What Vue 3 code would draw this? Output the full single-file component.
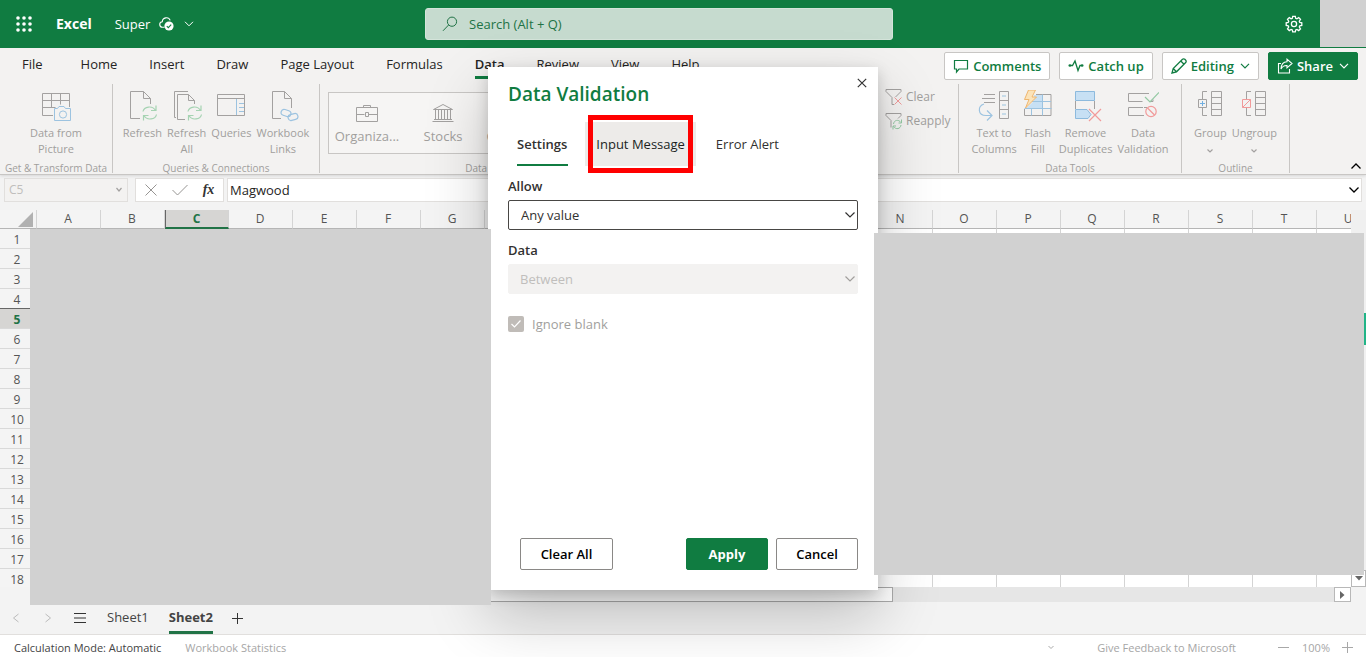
<script setup>
import { ref } from 'vue'

const menu = ['File', 'Home', 'Insert', 'Draw', 'Page Layout', 'Formulas', 'Data', 'Review', 'View', 'Help']
const columns = 'ABCDEFGHIJKLMNOPQRSTU'.split('')
const allow = ref('Any value')
const between = ref('Between')
const ignoreBlank = ref(true)
const cellValue = ref('Magwood')
const nameBox = ref('C5')
</script>

<template>
  <div class="app">
    <header class="topbar">
      <button class="waffle" aria-label="App launcher">
        <svg width="16" height="16" viewBox="0 0 16 16" fill="#fff">
          <g v-for="y in 3" :key="y">
            <circle v-for="x in 3" :key="x" :cx="x * 6 - 4" :cy="y * 6 - 4" r="1.8" />
          </g>
        </svg>
      </button>
      <span class="brand">Excel</span>
      <button class="docname">
        Super
        <svg width="16" height="16" viewBox="0 0 16 16" fill="none" stroke="#fff" stroke-width="1.1">
          <path d="M5.5 11.2H3.6a2.7 2.7 0 0 1-.3-5.4A4.1 4.1 0 0 1 11.2 4.4" />
          <circle cx="10" cy="10" r="4.6" fill="#fff" stroke="none" />
          <path d="M7.8 10.2l1.5 1.5 2.9-3.1" stroke="#107c41" />
        </svg>
        <svg width="10" height="6" viewBox="0 0 10 6" fill="none" stroke="#fff"><path d="M1 .8l4 4 4-4" /></svg>
      </button>
      <label class="search">
        <svg width="16" height="16" viewBox="0 0 16 16" fill="none" stroke="#217346"><circle cx="10" cy="5.7" r="4.6" /><path d="M6.6 9L1 14.8" /></svg>
        <input type="text" placeholder="Search (Alt + Q)" aria-label="Search" />
      </label>
      <button class="gear" aria-label="Settings">
        <svg width="18" height="18" viewBox="0 0 18 18" fill="none" stroke="#fff" stroke-width="1.3">
          <path d="M7.7 1.3h2.6l.4 2 1.2.5 1.8-1.2 1.8 1.8-1.2 1.8.5 1.2 2 .4v2.6l-2 .4-.5 1.2 1.2 1.8-1.8 1.8-1.8-1.2-1.2.5-.4 2H7.7l-.4-2-1.200-.5-1.800 1.200-1.800-1.800 1.200-1.800-.5-1.200-2-.4V7.800l2-.4.5-1.200-1.200-1.800 1.800-1.800 1.800 1.200 1.200-.5z" />
          <circle cx="9" cy="9" r="2.600" />
        </svg>
      </button>
      <div class="account"></div>
    </header>

    <section class="ribbon">
      <div class="menurow">
        <nav class="menu">
          <button v-for="m in menu" :key="m" :class="{ on: m === 'Data' }">{{ m }}</button>
        </nav>
        <div class="actions">
          <button class="act">
            <svg width="16" height="16" viewBox="0 0 16 16" fill="none" stroke="#107c41" stroke-width="1.200"><path d="M1.500 2.500h13v8.500H6L3.500 14v-3h-2z" /></svg>Comments
          </button>
          <button class="act">
            <svg width="16" height="16" viewBox="0 0 16 16" fill="none" stroke="#107c41" stroke-width="1.300"><path d="M2 7.500h2.500L7 3l3 9.500 2-5h2" /><circle cx="1.800" cy="7.500" r="1.300" fill="#107c41" stroke="none" /><circle cx="14.200" cy="7.500" r="1.300" fill="#107c41" stroke="none" /></svg>Catch up
          </button>
          <button class="act">
            <svg width="16" height="16" viewBox="0 0 16 16" fill="none" stroke="#107c41" stroke-width="1.300"><path d="M1 15l1.200-4.500L11.500 1.300a1.600 1.600 0 0 1 2.300 0l.9.9a1.600 1.600 0 0 1 0 2.300L5.500 13.800zM9.800 3l3.200 3.200M2.200 10.500l3.300 3.300" /></svg>Editing
            <svg class="chev" width="10" height="6" viewBox="0 0 10 6" fill="none" stroke="#107c41" stroke-width="1.200"><path d="M1 .8l4 4 4-4" /></svg>
          </button>
          <button class="act share">
            <svg width="16" height="16" viewBox="0 0 16 16" fill="none" stroke="#fff" stroke-width="1.100"><path d="M4 5.500H1.500v9.500h11V11" /><path d="M10 1.200l5 4.300-5 4.300V7.500C7 7.300 5.300 8.500 4 11c.2-4.300 2.300-7 6-7.200z" /></svg>Share
            <svg class="chev" width="10" height="6" viewBox="0 0 10 6" fill="none" stroke="#fff" stroke-width="1.200"><path d="M1 .8l4 4 4-4" /></svg>
          </button>
        </div>
      </div>

      <div class="groups">
        <div class="group g-get">
          <div class="tools">
            <button class="tool">
              <svg width="32" height="32" viewBox="0 0 32 32" fill="none" stroke="#a3a1a0"><path d="M13 25.500H2.500v-22h27V17M2.500 10.500h27M2.500 17.500h13M11.500 3.500v14M20.500 3.500v11" /><path d="M14.500 18.500h3l1.500-2h5l1.500 2h5v12h-16z" fill="#f3f2f1" stroke="#9cc3e0" /><circle cx="23" cy="24.500" r="3.600" stroke="#9cc3e0" /></svg>
              <span>Data from<br />Picture</span>
            </button>
          </div>
          <p>Get &amp; Transform Data</p>
        </div>
        <div class="group g-query">
          <div class="tools">
            <button class="tool">
              <svg width="32" height="32" viewBox="0 0 32 32" fill="none" stroke="#a3a1a0"><path d="M14 28.500H4.500V1.500h13l7 7V14M17.500 1.500v7h7" /><path d="M17 21.500c1-5 9.500-6.500 12.500-1M30 15.500v5h-5M30.500 24.500c-1 5-9.500 6.500-12.500 1M17.500 30.500v-5h5" stroke="#a5d3b2" stroke-width="1.200" /></svg>
              <span>Refresh</span>
            </button>
            <button class="tool">
              <svg width="32" height="32" viewBox="0 0 32 32" fill="none" stroke="#a3a1a0"><path d="M5 27.500H3.500v-26H17M14 29.500H6.500V4.500h11l6 6V14M17.500 4.500v6h6" /><path d="M17 21.500c1-5 9.500-6.500 12.500-1M30 15.500v5h-5M30.500 24.500c-1 5-9.500 6.500-12.500 1M17.500 30.500v-5h5" stroke="#a5d3b2" stroke-width="1.200" /></svg>
              <span>Refresh<br />All</span>
            </button>
            <button class="tool">
              <svg width="32" height="32" viewBox="0 0 32 32" fill="none" stroke="#a3a1a0"><path d="M2.500 4.500h27v21h-27zM2.500 8.500h27" /><path d="M21.500 9v16M24 13.500h5M24 17.500h5M24 21.500h5" stroke="#9cc3e0" /></svg>
              <span>Queries</span>
            </button>
            <button class="tool">
              <svg width="32" height="32" viewBox="0 0 32 32" fill="none" stroke="#a3a1a0"><path d="M14 28.500H5.500V1.500h12l7 7V18M17.500 1.500v7h7" /><g stroke="#9cc3e0" stroke-width="1.200"><rect x="14" y="20" width="10" height="6" rx="3" transform="rotate(18 19 23)" /><rect x="21" y="24" width="10" height="6" rx="3" transform="rotate(-14 26 27)" /></g></svg>
              <span>Workbook<br />Links</span>
            </button>
          </div>
          <p>Queries &amp; Connections</p>
        </div>
        <div class="group g-types">
          <div class="gallery">
            <button>
              <svg width="24" height="20" viewBox="0 0 24 20" fill="none" stroke="#a3a1a0"><path d="M1.500 4.500h21v14h-21zM8.500 4.500v-2h7v2M1.500 11.500h8M14 11.500h8.500M10.500 9.500h3v4h-3z" /></svg>
              Organiza...
            </button>
            <button>
              <svg width="24" height="20" viewBox="0 0 24 20" fill="none" stroke="#a3a1a0"><path d="M2.500 6.500L12 1.500l9.500 5zM1.500 18.500h21M3 16.500h18M4.500 7v9M7.500 7v9M10.500 7v9M13.500 7v9M16.500 7v9M19.500 7v9" /></svg>
              Stocks
            </button>
            <button>
              <svg width="24" height="20" viewBox="0 0 24 20" fill="none" stroke="#a3a1a0"><path d="M1.500 4.500h21v12h-21z" /></svg>
              Currencies
            </button>
          </div>
          <p>Data Types</p>
        </div>
        <div class="group g-sort">
          <div class="stack">
            <button>
              <svg width="18" height="18" viewBox="0 0 18 18" fill="none" stroke="#a3a1a0"><path d="M1 1.500h15v2L10.500 9M1 1.500v2L7 9.500v7h2" /><path d="M9.500 9.500l7 7M16.500 9.500l-7 7" stroke="#f19a9a" /></svg>Clear
            </button>
            <button>
              <svg width="18" height="18" viewBox="0 0 18 18" fill="none" stroke="#a3a1a0"><path d="M1 1.500h15v2L13 6.500M1 1.500v2L6 8.500v7" /><path d="M8.500 12c.5-4 5-5 7.500-1.500M16.500 7.500v3.500h-3M16 13c-.5 4-5 5-7.500 1.500M8 17.500V14h3" stroke="#93c9a3" /></svg>Reapply
            </button>
          </div>
        </div>
        <div class="group g-data">
          <div class="tools">
            <button class="tool">
              <svg width="32" height="32" viewBox="0 0 32 32" fill="none" stroke="#a3a1a0"><path d="M6 4.500h11M4 8.500h13M6 12.500h11M21.500 1.500h9v27h-9zM21.500 10.500h9M21.500 19.500h9" /><path d="M24 6h4M24 15h4M24 24h4M6 14C-.5 16-.5 25.500 8 25.500h5M9 20.500l5 5-5 5" stroke="#9cc3e0" stroke-width="1.200" /></svg>
              <span>Text to<br />Columns</span>
            </button>
            <button class="tool">
              <svg width="32" height="32" viewBox="0 0 32 32" fill="none" stroke="#a3a1a0"><path d="M14 4.500h15v21H2.500V19" /><path d="M12 5h8.500v13H4.500L12 11z" fill="#c7e0f4" stroke="none" /><path d="M2.500 18.500h27M9.500 11.500H29M9.500 18.500v7M20.500 4.500v21" stroke="#9cc3e0" /><path d="M6.500 0h7L10 7h4.500L3.500 18 7 9.500H2.500z" fill="#fbe3b9" stroke="#efb66f" /></svg>
              <span>Flash<br />Fill</span>
            </button>
            <button class="tool">
              <svg width="32" height="32" viewBox="0 0 32 32" fill="none" stroke="#a3a1a0"><path d="M5.500 11v8M24.500 11v8" /><path d="M5.500 1.500h19v9h-19zM5.500 19.500H17l4 5-3 4H5.500z" fill="#c7e0f4" stroke="#8dbadd" /><path d="M19 19l12 12M31 19L19 31" stroke="#f19a9a" stroke-width="1.200" /></svg>
              <span>Remove<br />Duplicates</span>
            </button>
            <button class="tool">
              <svg width="32" height="32" viewBox="0 0 32 32" fill="none" stroke="#a3a1a0"><path d="M22 3.500H1.500v8h14M16 17.500H1.500v8H17M22 11.500h4v-2M20 17.500h-3" /><path d="M18 7l5 5 9-9.500" stroke="#93c9a3" stroke-width="1.200" /><circle cx="24" cy="21.500" r="5.200" stroke="#f19a9a" stroke-width="1.200" /><path d="M20.500 18l7 7" stroke="#f19a9a" stroke-width="1.200" /></svg>
              <span>Data<br />Validation</span>
            </button>
          </div>
          <p>Data Tools</p>
        </div>
        <div class="group g-outline">
          <div class="tools">
            <button class="tool">
              <svg width="28" height="32" viewBox="0 0 28 32" fill="none" stroke="#a3a1a0"><path d="M11 1.500H6.500V9M6.500 18v7.500H11M15.500 1.500h10v24h-10zM15.500 7.500h10M15.500 13.500h10M15.500 19.500h10M2.500 9.500h8v8h-8z" /><path d="M6.500 11v5M4 13.500h5" stroke="#71afe0" /></svg>
              <span>Group</span>
              <svg class="tiny" width="8" height="5" viewBox="0 0 8 5" fill="none" stroke="#a3a1a0" stroke-width="1.200"><path d="M1.500 .5L4 3 6.500.5" /></svg>
            </button>
            <button class="tool">
              <svg width="28" height="32" viewBox="0 0 28 32" fill="none" stroke="#a3a1a0"><path d="M11 1.500H6.500V9M6.500 18v7.500H11M15.500 1.500h10v24h-10zM15.500 7.500h10M15.500 13.500h10M15.500 19.500h10" /><path d="M2.500 9.500h8v8h-8zM2.500 17.500l8-8" stroke="#f19a9a" /></svg>
              <span>Ungroup</span>
              <svg class="tiny" width="8" height="5" viewBox="0 0 8 5" fill="none" stroke="#a3a1a0" stroke-width="1.200"><path d="M1.500 .5L4 3 6.500.5" /></svg>
            </button>
          </div>
          <p>Outline</p>
        </div>
        <button class="collapse" aria-label="Collapse ribbon">
          <svg width="12" height="8" viewBox="0 0 12 8" fill="none" stroke="#000" stroke-width="1.300"><path d="M1.500 6.500L6 2l4.500 4.500" /></svg>
        </button>
      </div>
    </section>

    <section class="formula">
      <label class="namebox">
        <input v-model="nameBox" type="text" aria-label="Name box" disabled />
        <svg width="8" height="6" viewBox="0 0 8 6" fill="none" stroke="#a3a1a0" stroke-width="1.200"><path d="M1.500 1L4 4l2.500-3" /></svg>
      </label>
      <div class="fxbox">
        <button aria-label="Cancel entry"><svg width="14" height="14" viewBox="0 0 14 14" fill="none" stroke="#979593"><path d="M1.500 1.500l11 11M12.500 1.500l-11 11" /></svg></button>
        <button aria-label="Enter"><svg width="18" height="14" viewBox="0 0 18 14" fill="none" stroke="#979593"><path d="M1.500 7l5 5L16.500 2" /></svg></button>
        <button class="fx">fx</button>
      </div>
      <label class="entry">
        <input v-model="cellValue" type="text" aria-label="Formula bar" />
        <svg width="12" height="8" viewBox="0 0 12 8" fill="none" stroke="#000" stroke-width="1.300"><path d="M1.500 1.500L6 6l4.500-4.500" /></svg>
      </label>
    </section>

    <main class="sheet">
      <div class="viewport">
        <table>
          <thead>
            <tr>
              <th class="corner"><svg width="16" height="15" viewBox="0 0 16 15" fill="#b1b1b1"><path d="M15 0v15H0z" /></svg></th>
              <th v-for="c in columns" :key="c" :class="{ sel: c === 'C' }">{{ c }}</th>
            </tr>
          </thead>
          <tbody>
            <tr v-for="r in 18" :key="r">
              <th :class="{ sel: r === 5, before: r === 4 }">{{ r }}</th>
              <td v-for="c in columns" :key="c"></td>
            </tr>
          </tbody>
        </table>
      </div>
      <div class="vscroll">
        <div class="vthumb"></div>
        <button aria-label="Scroll down"><svg width="8" height="5" viewBox="0 0 8 5" fill="#666"><path d="M0 0h8L4 4.500z" /></svg></button>
      </div>
      <div class="hscroll">
        <div class="hthumb"></div>
        <button aria-label="Scroll right"><svg width="5" height="8" viewBox="0 0 5 8" fill="#666"><path d="M0 0v8l4.500-4z" /></svg></button>
      </div>
    </main>

    <nav class="sheets">
      <button aria-label="Previous sheet"><svg width="8" height="10" viewBox="0 0 8 10" fill="none" stroke="#bbb"><path d="M6.500 1l-5 4 5 4" /></svg></button>
      <button aria-label="Next sheet"><svg width="8" height="10" viewBox="0 0 8 10" fill="none" stroke="#bbb"><path d="M1.500 1l5 4-5 4" /></svg></button>
      <button aria-label="All sheets"><svg width="14" height="10" viewBox="0 0 14 10" fill="none" stroke="#333"><path d="M1 .5h12M1 5h12M1 9.500h12" /></svg></button>
      <button class="tab">Sheet1</button>
      <button class="tab cur">Sheet2</button>
      <button aria-label="New sheet"><svg width="12" height="12" viewBox="0 0 12 12" fill="none" stroke="#333"><path d="M6.500 1v11M1 6.500h11" /></svg></button>
    </nav>

    <footer class="status">
      <span class="mode">Calculation Mode: Automatic</span>
      <span>Workbook Statistics</span>
      <svg class="more" width="8" height="6" viewBox="0 0 8 6" fill="none" stroke="#aaa"><path d="M1.500 1L4 3.500 6.500 1" /></svg>
      <a href="#">Give Feedback to Microsoft</a>
      <button aria-label="Zoom out"><svg width="12" height="12" viewBox="0 0 12 12" fill="none" stroke="#a8a8a8"><path d="M1 5.500h11" /></svg></button>
      <span class="zoom">100%</span>
      <button aria-label="Zoom in"><svg width="12" height="12" viewBox="0 0 12 12" fill="none" stroke="#a8a8a8"><path d="M1 5.500h11M6.500 0v11" /></svg></button>
    </footer>

    <div class="layer">
      <section class="dialog" role="dialog" aria-label="Data Validation">
        <div class="dhead">
          <h1>Data Validation</h1>
          <button aria-label="Close"><svg width="10" height="10" viewBox="0 0 10 10" fill="none" stroke="#333" stroke-width="1.200"><path d="M.8.8l8.400 8.400M9.200.8L.8 9.200" /></svg></button>
        </div>
        <div class="dtabs">
          <button class="cur">Settings</button>
          <button class="hover">Input Message<i class="mark"></i></button>
          <button>Error Alert</button>
        </div>
        <label class="flabel" for="allow">Allow</label>
        <div class="pick">
          <select id="allow" v-model="allow"><option>Any value</option></select>
          <svg width="12" height="8" viewBox="0 0 12 8" fill="none" stroke="#323130" stroke-width="1.200"><path d="M1.500 1.500L6 6l4.500-4.500" /></svg>
        </div>
        <label class="flabel" for="cond">Data</label>
        <div class="pick">
          <select id="cond" v-model="between" disabled><option>Between</option></select>
          <svg width="12" height="8" viewBox="0 0 12 8" fill="none" stroke="#a19f9d" stroke-width="1.200"><path d="M1.500 1.500L6 6l4.500-4.500" /></svg>
        </div>
        <label class="check"><input v-model="ignoreBlank" type="checkbox" disabled /><svg width="12" height="10" viewBox="0 0 12 10" fill="none" stroke="#fff" stroke-width="1.200"><path d="M1.500 5l3 3 6-6.500" /></svg>Ignore blank</label>
        <div class="dfoot">
          <button>Clear All</button>
          <button class="primary">Apply</button>
          <button>Cancel</button>
        </div>
      </section>
    </div>

    <div class="mask left"></div>
    <div class="mask right"></div>
  </div>
</template>

<style>
html, body { margin: 0; overflow: hidden; }
</style>

<style scoped>
.app { position: relative; display: flex; flex-direction: column; min-height: 100vh; background: #f3f3f3; color: #252423; font: 13px/16px "Open Sans", "Noto Sans", sans-serif; overflow: hidden; }
button { display: flex; align-items: center; justify-content: center; padding: 0; border: 0; background: none; color: inherit; font: inherit; white-space: nowrap; }
input, select { font: inherit; color: inherit; border: 0; outline: 0; padding: 0; background: none; min-width: 0; }
svg { flex: none; display: block; }
p, h1 { margin: 0; }

.topbar { position: relative; display: flex; align-items: center; height: 48px; background: #107c41; color: #fff; }
.waffle { width: 47px; height: 48px; }
.brand { margin-left: 9px; font-size: 14px; font-weight: 700; }
.docname { margin-left: 23px; gap: 9px; }
.search { position: absolute; left: 425px; right: 473px; top: 8px; height: 32px; box-sizing: border-box; display: flex; align-items: center; gap: 11px; padding-left: 16px; border: 1px solid #d4e4da; border-radius: 3px; background: #c6dbcf; }
.search input { flex: 1; color: #217346; }
.search input::placeholder { color: #217346; opacity: 1; }
.gear { margin-left: auto; width: 52px; height: 48px; }
.account { align-self: flex-start; width: 46px; height: 47px; background: #d1d1d1; }

.ribbon { background: #f3f2f1; border-bottom: 1px solid #c8c6c4; box-shadow: 0 1px 3px rgba(0, 0, 0, .12); }
.menurow { display: flex; justify-content: space-between; align-items: flex-start; height: 36px; }
.menu { display: flex; gap: 32px; padding-left: 22px; }
.menu button { height: 31px; padding-top: 3px; box-sizing: border-box; border-bottom: 3px solid transparent; }
.menu button:first-child { margin-right: 6px; }
.menu button.on { border-color: #107c41; font-weight: 600; }
.actions { display: flex; gap: 9px; padding: 4px 8px 0 0; }
.act { height: 28px; box-sizing: border-box; padding: 0 8px; gap: 4px; border: 1px solid #c8c6c4; border-radius: 2px; background: #fff; color: #107c41; font-weight: 600; }
.act .chev { margin-left: 2px; }
.share { background: #107c41; border-color: #107c41; color: #fff; }

.groups { display: flex; height: 90px; color: #a19f9d; position: relative; }
.group { position: relative; flex: none; box-sizing: border-box; display: flex; flex-direction: column; justify-content: space-between; border-right: 1px solid #c8c6c4; height: 89px; }
.group p { font-size: 10px; line-height: 10px; text-align: center; }
.g-get { width: 113px; }
.g-query { width: 207px; }
.g-types { width: 342px; border-right: 0; }
.g-sort { width: 297px; }
.g-data { width: 223px; }
.g-outline { width: 108px; }
.tools { display: flex; justify-content: center; gap: 5px; padding-top: 6px; }
.tool { flex-direction: column; justify-content: flex-start; font-size: 11px; gap: 3px; }
.tool .tiny { margin-top: 5px; }
.gallery { display: flex; margin: 8px 8px 0; height: 62px; box-sizing: border-box; border: 1px solid #c8c6c4; background: #f6f5f4; }
.gallery button { flex-direction: column; width: 76px; gap: 5px; font-size: 13px; }
.stack { display: flex; flex-direction: column; gap: 6px; padding: 4px 0 0 223px; }
.stack button { justify-content: flex-start; gap: 3px; font-size: 12px; }
.collapse { position: absolute; right: 4px; bottom: 4px; }

.formula { display: flex; align-items: center; height: 24px; padding: 3px 4px 4px; }
.namebox, .fxbox, .entry { display: flex; align-items: center; height: 24px; box-sizing: border-box; border: 1px solid #e1dfdd; }
.namebox { width: 124px; padding: 0 4px; background: #f3f2f1; color: #c0bebc; font-size: 12px; }
.namebox input { flex: 1; }
.fxbox { width: 89px; margin: 0 3px 0 7px; background: #fff; }
.fxbox button { flex: 1; }
.fx { font: italic 700 14px/16px "Liberation Serif", serif; color: #333; }
.entry { flex: 1; padding: 0 1px 0 2px; background: #fff; }
.entry input { flex: 1; }

.sheet { flex: 1 1 0; display: grid; grid-template-columns: minmax(0, 1fr) 15px; grid-template-rows: minmax(0, 1fr) 15px; margin: 4px 0 3px; min-height: 0; }
.viewport { overflow: hidden; min-height: 0; }
table { border-collapse: separate; border-spacing: 0; table-layout: fixed; width: 1381px; }
th, td { box-sizing: border-box; padding: 0; height: 20px; border-right: 1px solid #d4d4d4; border-bottom: 1px solid #d9d9d9; background: #fff; }
th { width: 64px; font-size: 12px; line-height: 16px; font-weight: 400; color: #555; background: #f4f4f4; }
thead th { height: 19px; border-bottom-color: #b5b5b5; padding-right: 1px; }
tbody th, .corner { width: 37px; }
tbody th { border-right-color: #b5b5b5; padding: 2px 2px 0 0; }
thead .corner { padding: 0 2px 0 18px; }
th.sel { background: #d6d5d3; color: #217346; font-weight: 700; }
thead th.sel { border-bottom: 2px solid #217346; border-left: 1px solid #666; }
.before { border-bottom-color: #666; }
.vscroll { display: flex; flex-direction: column; justify-content: flex-end; background: #f0f0f0; }
.vscroll button, .hscroll button { width: 15px; height: 17px; box-sizing: border-box; border: 1px solid #b8b8b8; background: #fff; }
.vthumb { flex: none; align-self: flex-end; width: 3px; height: 32px; margin-bottom: 225px; background: #21b487; }
.hscroll { display: flex; justify-content: space-between; margin-left: 37px; background: #e6e6e6; }
.hscroll button { width: 17px; height: 15px; }
.hthumb { width: 856px; box-sizing: border-box; border: 1px solid #ababab; background: #fff; }

.sheets { display: flex; align-items: stretch; height: 29px; padding-left: 12px; color: #444; }
.sheets > button { padding-bottom: 4px; box-sizing: border-box; }
.sheets > button:nth-child(2) { margin-left: 24px; }
.sheets > button:nth-child(3) { margin-left: 21px; }
.sheets .tab { margin-left: 20px; border-bottom: 3px solid transparent; padding-bottom: 2px; }
.sheets .cur { border-color: #217346; font-weight: 700; }
.sheets > button:last-child { margin-left: 18px; }
.status { display: flex; align-items: center; height: 23px; box-sizing: border-box; padding: 3px 13px 0 14px; border-top: 1px solid #e1dfdd; background: #fff; color: #a6a6a6; font-size: 11px; }
.mode { color: #444; margin-right: 24px; }
.more { margin-left: auto; margin-right: 42px; }
.status a { color: inherit; text-decoration: none; margin-right: 41px; }
.zoom { margin: 0 11px 0 13px; }

.layer { position: absolute; inset: 0; display: flex; align-items: center; justify-content: center; }
.dialog { width: 390px; height: 523px; box-sizing: border-box; padding: 0 20px 20px; display: flex; flex-direction: column; background: #fff; box-shadow: 0 26px 58px rgba(0, 0, 0, .22), 0 5px 14px rgba(0, 0, 0, .18); color: #323130; }
.dhead { display: flex; justify-content: space-between; align-items: center; height: 53px; padding-bottom: 2px; }
.dhead h1 { font-size: 19px; line-height: 26px; font-weight: 600; color: #107c41; }
.dhead button { width: 32px; height: 32px; margin: -22px -20px 0 0; }
.dtabs { display: flex; gap: 9px; }
.dtabs button { position: relative; height: 44px; padding: 0 11px; }
.dtabs .cur { font-weight: 600; padding: 0 9px; }
.dtabs .cur::after { content: ""; position: absolute; left: 9px; right: 8px; bottom: 0; height: 2px; background: #107c41; }
.dtabs .hover { background: #edebe9; color: #201f1e; }
.mark { position: absolute; inset: -7px 3px; border: 5px solid #f00; }
.flabel { margin: 12px 0 6px; font-weight: 600; }
.pick { position: relative; display: flex; height: 30px; }
.pick select { flex: 1; appearance: none; border: 1px solid #484644; border-radius: 2px; padding: 0 28px 0 12px; }
.pick select:disabled { border-color: #f3f2f1; background: #f3f2f1; color: #c0bebc; opacity: 1; padding-left: 11px; }
.pick svg { position: absolute; right: 2px; top: 11px; }
.check { position: relative; display: flex; align-items: center; gap: 8px; margin-top: 22px; color: #a19f9d; }
.check input { appearance: none; width: 16px; height: 16px; margin: 0; border-radius: 2px; background: #c0bcb8; }
.check svg { position: absolute; left: 2px; top: 3px; }
.dfoot { display: flex; gap: 8px; margin-top: auto; padding-left: 12px; }
.dfoot button { width: 82px; height: 32px; box-sizing: border-box; border: 1px solid #8a8886; border-radius: 2px; color: #000; font-weight: 600; }
.dfoot button:first-child { width: 93px; margin-right: auto; }
.dfoot .primary { background: #107c41; border-color: #107c41; color: #fff; font-weight: 700; }

.mask { position: absolute; background: #d1d1d1; }
.left { left: 30px; top: 229px; width: 461px; bottom: 52px; }
.right { left: 874px; right: 2px; top: 233px; bottom: 82px; }
</style>
